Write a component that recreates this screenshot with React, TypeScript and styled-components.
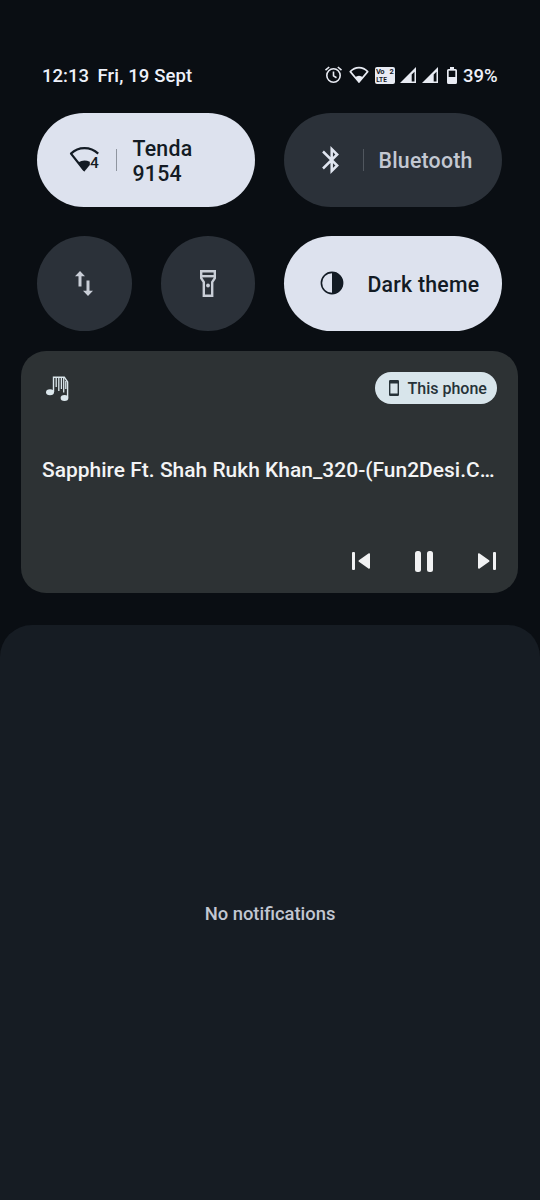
import React from 'react';
import styled, { createGlobalStyle } from 'styled-components';

const GlobalStyle = createGlobalStyle`
  * { box-sizing: border-box; }
  body { margin: 0; background: #0a0e13; }
  svg { display: block; flex: none; }
`;

const Screen = styled.main`
  display: flex;
  flex-direction: column;
  width: 540px;
  height: 1200px;
  overflow: hidden;
  padding-top: 63px;
  background: #0a0e13;
  font-family: Roboto, sans-serif;
  font-weight: 500;
`;

const StatusBar = styled.header`
  display: flex;
  align-items: center;
  height: 24px;
  padding: 0 42px;
  color: #eef1fa;
  font-size: 18.5px;
  line-height: 24px;
  white-space: pre;
`;

const Clock = styled.span`
  width: 55.5px;
  padding-top: 1px;
`;

const DateText = styled.span`
  flex: 1;
  padding-top: 1px;
  letter-spacing: 0.14px;
`;

const StatusIcons = styled.div`
  display: flex;
  align-items: center;
  gap: 6px;
`;

const SignalPair = styled.div`
  display: flex;
  gap: 6px;
  margin: 0 3px 0 -1px;
`;

const BatteryLevel = styled.span`
  width: 35px;
  padding-top: 1px;
`;

const Tiles = styled.section`
  display: grid;
  grid-template-columns: repeat(4, 94.5px);
  grid-auto-rows: 94.5px;
  gap: 29px;
  margin: 25.5px 38px 0 37px;
`;

const Tile = styled.button<{ $wide?: boolean; $active?: boolean }>`
  display: flex;
  align-items: center;
  justify-content: ${p => (p.$wide ? 'flex-start' : 'center')};
  grid-column: span ${p => (p.$wide ? 2 : 1)};
  padding: 0;
  border: 0;
  border-radius: 48px;
  background: ${p => (p.$active ? '#dde2ee' : '#2b3139')};
  color: ${p => (p.$active ? '#131b24' : '#c3c8d2')};
  font: inherit;
`;

const TileIcon = styled.span<{ $start: number }>`
  display: block;
  margin-left: ${p => p.$start}px;
`;

const Divider = styled.i<{ $gap: number; $dim?: boolean }>`
  width: 1px;
  height: 22px;
  margin-left: ${p => p.$gap}px;
  background: ${p => (p.$dim ? '#51575f' : '#8f959f')};
`;

const TileLabel = styled.span<{ $gap: number }>`
  margin-left: ${p => p.$gap}px;
  padding-top: 2px;
  font-size: 21.3px;
  line-height: 25px;
  letter-spacing: 0.22px;
  text-align: left;
  white-space: pre;
`;

const MediaCard = styled.section`
  display: flex;
  flex-direction: column;
  height: 242px;
  margin: 20.5px 22px 0 21px;
  padding: 21px 21px 0;
  border-radius: 25px;
  background: #2d3234;
`;

const MediaHeader = styled.div`
  display: flex;
  align-items: flex-start;
  justify-content: space-between;
  height: 32px;
  padding-left: 4px;
`;

const AppIcon = styled.span`
  margin-top: 4px;
`;

const OutputChip = styled.button`
  display: flex;
  align-items: center;
  gap: 8.5px;
  width: 122px;
  height: 32px;
  padding: 0 0 0 14px;
  border: 0;
  border-radius: 16px;
  background: #d8e5eb;
  color: #263238;
  font: inherit;
  font-size: 16px;
  line-height: 20px;
  white-space: nowrap;
`;

const ChipLabel = styled.span`
  padding-top: 1px;
`;

const TrackTitle = styled.h1`
  margin: 53px 0 0;
  color: #f3f4f5;
  font-size: 20.95px;
  font-weight: 500;
  line-height: 26px;
  letter-spacing: 0.02px;
  white-space: nowrap;
`;

const Controls = styled.div`
  display: flex;
  align-items: center;
  justify-content: flex-end;
  height: 24px;
  margin-top: 66px;
  padding-right: 1px;
`;

const Control = styled.span<{ $before?: number }>`
  margin-left: ${p => p.$before ?? 0}px;
`;

const Notifications = styled.section`
  display: flex;
  flex: 1;
  align-items: center;
  justify-content: center;
  margin-top: 32px;
  padding-top: 2px;
  border-radius: 32px 32px 0 0;
  background: #161c23;
  color: #c2c7d1;
  font-size: 18.4px;
  line-height: 24px;
`;

const AlarmIcon = () => (
  <svg width="19" height="18" viewBox="0 0 19 18" fill="none" stroke="#e8ebf3" strokeWidth="1.6">
    <circle cx="9.5" cy="9.5" r="6.7" />
    <path d="M9.5 5.5v4.4l3 1.8M1.5 4.2l3.7-3.2M17.5 4.2l-3.7-3.2" />
  </svg>
);

const WifiIcon = () => (
  <svg width="20" height="18" viewBox="0 0 20 18">
    <path d="M1.3 5.6C6.3.3 13.7.3 18.7 5.6L10 16z" fill="none" stroke="#e8ebf3" strokeWidth="1.7" strokeLinejoin="round" />
    <path d="M6 11.2Q10 8.2 14 11.2L10 16.4z" fill="#e8ebf3" />
  </svg>
);

const VolteIcon = () => (
  <svg width="20" height="17" viewBox="0 0 20 17" fontFamily="Roboto, sans-serif" fontWeight="700" fontSize="7.5">
    <rect width="20" height="17" rx="2" fill="#e8ebf3" />
    <g fill="#14181e">
      <text x="1" y="7.2" textLength="8.5">Vo</text>
      <text x="14.5" y="7.2">2</text>
      <text x="1.3" y="15" fontSize="8" textLength="10.5" lengthAdjust="spacingAndGlyphs">LTE</text>
    </g>
  </svg>
);

const SignalIcon = () => (
  <svg width="16" height="16" viewBox="0 0 16 16" fill="#e8ebf3">
    <path fillRule="evenodd" d="M16 0v16H0zM14.5 4.8v9.8h-2.8V7.6z" />
  </svg>
);

const BatteryIcon = () => (
  <svg width="10" height="17" viewBox="0 0 10 17">
    <path d="M3 0h4v2h1.5A1.5 1.5 0 0 1 10 3.5V15.5A1.5 1.5 0 0 1 8.5 17h-7A1.5 1.5 0 0 1 0 15.5V3.5A1.5 1.5 0 0 1 1.5 2H3z" fill="#e8ebf3" />
    <path d="M1.7 3.7h6.6v6.3H1.7z" fill="#0a0e13" />
  </svg>
);

const WifiFourIcon = () => (
  <svg width="31" height="27" viewBox="0 0 31 27" fill="#131b24">
    <path d="M15.2 24.3L2 7.6C9.500.2 21.300.2 29.200 7.600" fill="none" stroke="#131b24" strokeWidth="2.2" strokeLinejoin="round" />
    <path d="M9.500 16.200Q15 12.800 20.800 15.800V19L15.200 25.800z" />
    <text x="21" y="21.600" fontFamily="Roboto, sans-serif" fontSize="15.500" fontWeight="500">4</text>
  </svg>
);

const BluetoothIcon = () => (
  <svg width="20" height="28" viewBox="0 0 20 28" fill="none" stroke="#e0e5f0" strokeWidth="2.5">
    <path d="M2 5.5L16.2 19.5 10.7 25V3L16.2 8.5 2 22.5" />
  </svg>
);

const DataArrowsIcon = () => (
  <svg width="18" height="25" viewBox="0 0 18 25" fill="#c9ced7">
    <path d="M5 0l5 5.2H6.5V15.5H3.5V5.2H0zM13 25l-5-5.2h3.5V9.5h3v10.300H18z" />
  </svg>
);

const TorchIcon = () => (
  <svg width="16" height="27" viewBox="0 0 16 27">
    <path d="M1.2 1.2h13.6v6.9l-2.6 4V25.8H3.8V12.1l-2.6-4z" fill="none" stroke="#c9ced7" strokeWidth="2.4" />
    <path d="M1 5h14v2.4H1z" fill="#c9ced7" />
    <circle cx="8" cy="15.5" r="1.9" fill="#c9ced7" />
  </svg>
);

const ContrastIcon = () => (
  <svg width="24" height="24" viewBox="0 0 24 24">
    <circle cx="12" cy="12" r="10.6" fill="none" stroke="#131b24" strokeWidth="1.6" />
    <path d="M12 1a11 11 0 0 1 0 22z" fill="#131b24" />
  </svg>
);

const MusicIcon = () => (
  <svg width="23" height="26" viewBox="0 0 23 26" fill="#dbe7ec">
    <ellipse cx="4" cy="16.3" rx="4" ry="3" />
    <ellipse cx="18.5" cy="22" rx="3.9" ry="3" />
    <path d="M7.5 16V1.2h10.8L21.6 6v15.5" fill="none" stroke="#dbe7ec" strokeWidth="1.4" />
    <path d="M10.2 2v9M12.8 2v13M15.4 2v11M17.7 2v14.5M19.8 5v8" fill="none" stroke="#dbe7ec" strokeWidth="1.3" />
  </svg>
);

const PhoneIcon = () => (
  <svg width="10" height="16" viewBox="0 0 10 16">
    <path fillRule="evenodd" d="M1.2 0h7.6Q10 0 10 1.2v13.6Q10 16 8.8 16H1.2Q0 16 0 14.8V1.2Q0 0 1.2 0zM1.4 3.5h7.2v10H1.4z" fill="#263238" />
  </svg>
);

const PreviousIcon = () => (
  <svg width="18" height="18" viewBox="0 0 18 18" fill="#f1f2f3">
    <rect width="3" height="18" rx="1" />
    <path d="M17 2.2v13.6L7.5 9z" stroke="#f1f2f3" strokeWidth="2" strokeLinejoin="round" />
  </svg>
);

const PauseIcon = () => (
  <svg width="18" height="21" viewBox="0 0 18 21" fill="#f1f2f3">
    <rect width="6" height="21" rx="2.5" />
    <rect x="12" width="6" height="21" rx="2.5" />
  </svg>
);

const NextIcon = () => (
  <svg width="18" height="18" viewBox="0 0 18 18" fill="#f1f2f3">
    <rect x="15" width="3" height="18" rx="1" />
    <path d="M1 2.2v13.6L10.500 9z" stroke="#f1f2f3" strokeWidth="2" strokeLinejoin="round" />
  </svg>
);

export default function App() {
  return (
    <Screen>
      <GlobalStyle />
      <StatusBar>
        <Clock>12:13</Clock>
        <DateText>Fri, 19 Sept</DateText>
        <StatusIcons>
          <AlarmIcon />
          <WifiIcon />
          <VolteIcon />
          <SignalPair>
            <SignalIcon />
            <SignalIcon />
          </SignalPair>
          <BatteryIcon />
          <BatteryLevel>39%</BatteryLevel>
        </StatusIcons>
      </StatusBar>
      <Tiles>
        <Tile $wide $active>
          <TileIcon $start={32}><WifiFourIcon /></TileIcon>
          <Divider $gap={16} />
          <TileLabel $gap={15.5}>{'Tenda\n9154'}</TileLabel>
        </Tile>
        <Tile $wide>
          <TileIcon $start={37}><BluetoothIcon /></TileIcon>
          <Divider $gap={22} $dim />
          <TileLabel $gap={14.5}>Bluetooth</TileLabel>
        </Tile>
        <Tile><DataArrowsIcon /></Tile>
        <Tile><TorchIcon /></Tile>
        <Tile $wide $active>
          <TileIcon $start={35.5}><ContrastIcon /></TileIcon>
          <TileLabel $gap={24}>Dark theme</TileLabel>
        </Tile>
      </Tiles>
      <MediaCard>
        <MediaHeader>
          <AppIcon><MusicIcon /></AppIcon>
          <OutputChip><PhoneIcon /><ChipLabel>This phone</ChipLabel></OutputChip>
        </MediaHeader>
        <TrackTitle>Sapphire Ft. Shah Rukh Khan_320-(Fun2Desi.C…</TrackTitle>
        <Controls>
          <Control><PreviousIcon /></Control>
          <Control $before={45}><PauseIcon /></Control>
          <Control $before={45}><NextIcon /></Control>
        </Controls>
      </MediaCard>
      <Notifications>No notifications</Notifications>
    </Screen>
  );
}
